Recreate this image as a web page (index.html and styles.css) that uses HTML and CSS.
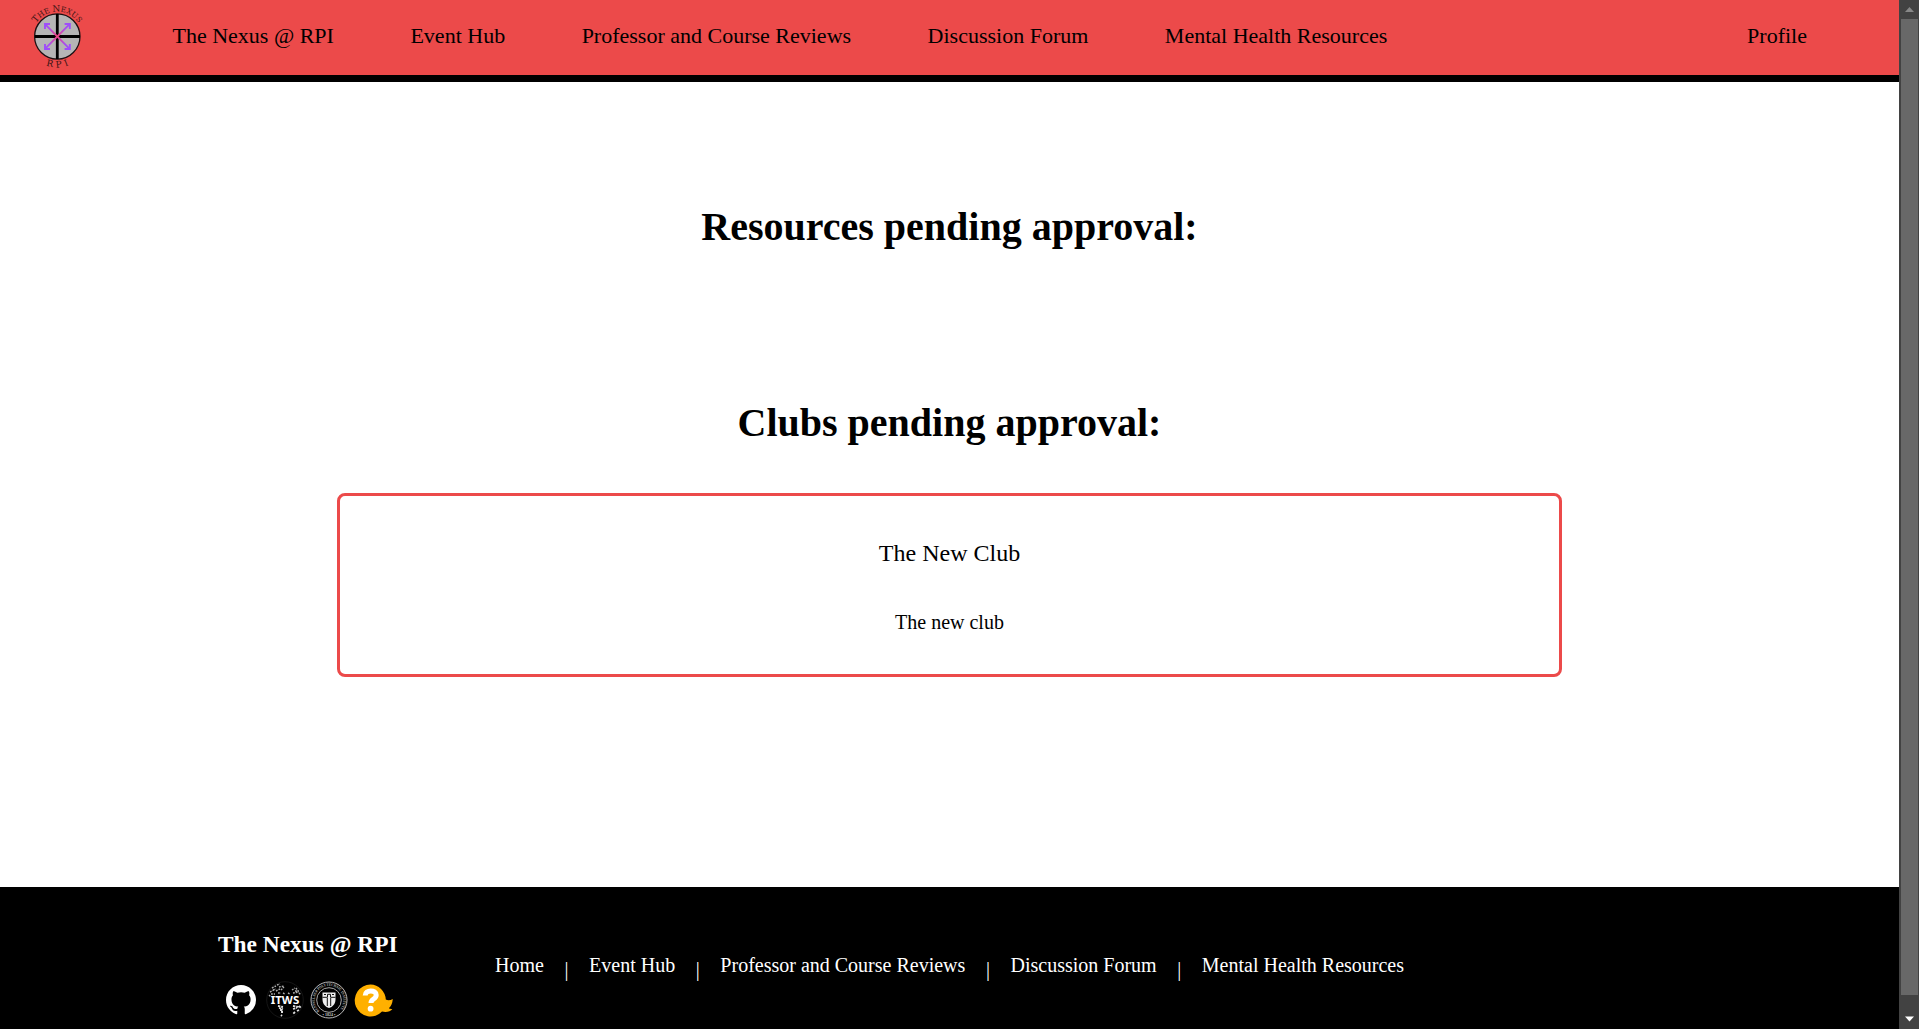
FILE: index.html
```html
<!DOCTYPE html>
<html lang="en">
<head>
<meta charset="utf-8">
<title>The Nexus @ RPI</title>
<link rel="stylesheet" href="styles.css">
</head>
<body>
<div class="page">
  <header class="header">
    <a class="logo">
      <svg width="52" height="68" viewBox="0 0 52 68">
        <defs>
          <path id="arc-top" d="M1.3 33.5A25 25 0 0 1 51.3 33.5"/>
          <path id="arc-bottom" d="M-4.7 33.5A31 31 0 0 0 57.3 33.5"/>
          <linearGradient id="g1" gradientUnits="userSpaceOnUse" x1="13" y1="20" x2="39" y2="46">
            <stop offset="0" stop-color="#9a4dff"/><stop offset=".2" stop-color="#a84df0"/><stop offset=".5" stop-color="#f0447c"/><stop offset=".8" stop-color="#a84df0"/><stop offset="1" stop-color="#9a4dff"/>
          </linearGradient>
          <linearGradient id="g2" gradientUnits="userSpaceOnUse" x1="39" y1="20" x2="13" y2="46">
            <stop offset="0" stop-color="#9a4dff"/><stop offset=".2" stop-color="#a84df0"/><stop offset=".5" stop-color="#f0447c"/><stop offset=".8" stop-color="#a84df0"/><stop offset="1" stop-color="#9a4dff"/>
          </linearGradient>
        </defs>
        <circle cx="26.3" cy="33.5" r="22.7" fill="#b5b5b5" stroke="#1c1012" stroke-width="1.3"/>
        <path d="M26.3 11V56M4 33.5H49" stroke="#000" stroke-width="2.8"/>
        <path d="M14 21.2L38.6 45.8M14 26V21H19M33.6 46H38.8V41" fill="none" stroke="url(#g1)" stroke-width="1.9"/>
        <path d="M38.6 21.2L14 45.8M33.6 21H38.8V26M14 41V46H19" fill="none" stroke="url(#g2)" stroke-width="1.9"/>
        <text class="logo-text"><textPath href="#arc-top" startOffset="50%">T<tspan class="sc">HE </tspan>N<tspan class="sc">EXUS</tspan></textPath></text>
        <text class="logo-rpi"><textPath href="#arc-bottom" startOffset="52%">RPI</textPath></text>
      </svg>
    </a>
    <nav class="nav">
      <a>The Nexus @ RPI</a>
      <a>Event Hub</a>
      <a>Professor and Course Reviews</a>
      <a>Discussion Forum</a>
      <a>Mental Health Resources</a>
      <a class="profile">Profile</a>
    </nav>
  </header>
  <main class="main">
    <h1 class="resources">Resources pending approval:</h1>
    <h1>Clubs pending approval:</h1>
    <section class="club">
      <h2>The New Club</h2>
      <p>The new club</p>
    </section>
  </main>
  <footer class="footer">
    <div class="brand">
      <h3>The Nexus @ RPI</h3>
      <div class="icons">
        <svg class="github" width="30" height="30" viewBox="0 0 16 16"><path fill="#fff" d="M8 0C3.58 0 0 3.58 0 8c0 3.54 2.29 6.53 5.47 7.59.4.07.55-.17.55-.38 0-.19-.01-.82-.01-1.49-2.01.37-2.53-.49-2.69-.94-.09-.23-.48-.94-.82-1.13-.28-.15-.68-.52-.01-.53.63-.01 1.08.58 1.23.82.72 1.21 1.87.87 2.33.66.07-.52.28-.87.51-1.07-1.78-.2-3.64-.89-3.64-3.95 0-.87.31-1.59.82-2.15-.08-.2-.36-1.02.08-2.12 0 0 .67-.21 2.2.82a7.6 7.6 0 0 1 4 0c1.53-1.04 2.2-.82 2.2-.82.44 1.1.16 1.92.08 2.12.51.56.82 1.27.82 2.15 0 3.07-1.87 3.75-3.65 3.95.29.25.54.73.54 1.48 0 1.07-.01 1.93-.01 2.2 0 .21.15.46.55.38A8.01 8.01 0 0 0 16 8c0-4.42-3.58-8-8-8z"/></svg>
        <svg width="38" height="38" viewBox="0 0 38 38">
          <circle cx="19" cy="19" r="18.3" fill="none" stroke="#151515"/>
          <path d="M11 4l3-1M6 7l4-2M13 6l5-1M4 11l4-2M10 10l4-2M15 9l3-3M26 9l3-2M27 12l6-1M30 7l2 3M22 12l2 1M17 12l2 1M5 13h4M12 12h3M33 12l2 2M3 14l2 2M7 9l3-1M29 10l4 0" stroke="#aaa" stroke-width="1.4" stroke-dasharray="1.8 1"/>
          <path d="M12 25l5 1M13 27l4 1M14 29l3 0M15 31l2 0M15 34l1 1M27 25l6 1M27 28l4-1M31 30l2-1M29 31l-2 2M33 25l2 2" stroke="#ddd" stroke-width="1.8" stroke-dasharray="2.4 .8"/>
          <text x="19" y="23" class="itws" textLength="28.5" lengthAdjust="spacingAndGlyphs">ITWS</text>
        </svg>
        <svg width="38" height="38" viewBox="0 0 38 38">
          <defs><path id="seal" d="M9.5 29.9A14.3 14.3 0 1 1 28.5 29.9"/></defs>
          <circle cx="19" cy="19" r="18" fill="none" stroke="#bbb" stroke-width="1"/>
          <circle cx="19" cy="19" r="12.3" fill="none" stroke="#bbb" stroke-width=".9"/>
          <text class="seal-text"><textPath href="#seal" textLength="66" lengthAdjust="spacingAndGlyphs">RENSSELAER POLYTECHNIC INSTITUTE</textPath></text>
          <text x="19" y="35.4" class="seal-year">• 1824 •</text>
          <path d="M12.5 11.5h13v7c0 4.5-3 7.5-6.5 8.5c-3.5-1-6.5-4-6.5-8.5z" fill="#eee"/>
          <path d="M12.5 16.3h5v-3h3v3h5M17.3 17v8M20.7 17v8M14 13.5h2M22 13.5h2" fill="none" stroke="#111" stroke-width="1"/>
        </svg>
        <svg class="duck" width="38" height="33" viewBox="0 0 38 33">
          <path fill="#ffb000" d="M15.5 .5a15.800 16 0 1 0 11.500 27c4.500 1 8.500 0 10.400-2.500c-1.500 .2-2.800-.1-3.600-.7c2-1.500 3.600-4.700 4-9.300c-2.600 1.400-5.100 1.600-7 .5A15.800 16 0 0 0 15.500 .5z"/>
          <path d="M10.200 11.500c0-6 11-6 11-.5c0 4.500-5.200 3.500-5.200 8" fill="none" stroke="#fff" stroke-width="5"/>
          <circle cx="15.600" cy="24.700" r="2.900" fill="#fff"/>
        </svg>
      </div>
    </div>
    <nav class="links">
      <a>Home</a><span>|</span><a>Event Hub</a><span>|</span><a>Professor and Course Reviews</a><span>|</span><a>Discussion Forum</a><span>|</span><a>Mental Health Resources</a>
    </nav>
  </footer>
</div>
<div class="scrollbar">
  <svg width="20" height="19" viewBox="0 0 20 19"><path fill="#888" d="M6 12L10.500 7L15 12z"/></svg>
  <div class="thumb"></div>
  <svg width="20" height="34" viewBox="0 0 20 34"><path fill="#fff" d="M6 21.500H15L10.500 26.500z"/></svg>
</div>
</body>
</html>
```
FILE: styles.css
```css
* { box-sizing: border-box; }
body {
  margin: 0;
  height: 1029px;
  display: flex;
  overflow: hidden;
  background: #fff;
  color: #000;
  font-family: "Liberation Serif", "Times New Roman", serif;
}
svg { display: block; flex: none; overflow: visible; }
h1, h2, h3, p { margin: 0; font-weight: normal; }
.page { width: 1899px; display: flex; flex-direction: column; }

.header {
  height: 82px;
  display: flex;
  background: #ec4a4a;
  border-bottom: 7px solid #000;
}
.logo { padding: 3px 0 0 31px; }
.logo-text, .logo-rpi {
  font-family: "DejaVu Serif", serif;
  fill: #3a1414;
  text-anchor: middle;
}
.logo-text { font-size: 9px; }
.logo-text .sc { font-size: 7.4px; }
.logo-rpi { font-size: 9px; letter-spacing: 3.5px; }
.nav {
  flex: 1;
  display: flex;
  gap: 76.5px;
  padding: 23px 92px 0 89.5px;
  font-size: 22px;
  line-height: 25px;
  white-space: nowrap;
}
.profile { margin-left: auto; }

.main { flex: 1; text-align: center; padding-top: 122px; }
h1 { font-size: 40px; font-weight: bold; line-height: 46px; }
.resources { margin-bottom: 150px; }
.club {
  width: 1225px;
  height: 184px;
  margin: 47px auto 0;
  padding-top: 43px;
  border: 3px solid #ec4a4a;
  border-radius: 8px;
}
.club h2 { font-size: 24px; line-height: 28px; }
.club p { font-size: 20px; line-height: 22px; margin-top: 44px; }

.footer {
  height: 142px;
  display: flex;
  background: #000;
  color: #fff;
  padding-left: 218px;
}
.brand { width: 277px; padding-top: 44px; }
h3 { font-size: 23.4px; font-weight: bold; line-height: 26px; }
.icons { display: flex; align-items: center; gap: 6px; padding: 24px 0 0 8px; }
.github { margin-right: 4px; }
.duck { margin-left: 1px; }
.itws { font: bold 11px "Noto Sans", sans-serif; fill: #fff; text-anchor: middle; }
.seal-text { font: bold 4px "Liberation Serif", serif; fill: #bbb; }
.seal-year { font: bold 4px "Liberation Serif", serif; fill: #ccc; text-anchor: middle; }
.links { display: flex; padding-top: 67px; font-size: 20px; line-height: 22px; white-space: nowrap; }
.links span { width: 45.2px; text-align: center; padding-top: 4px; }

.scrollbar { width: 20px; background: #424242; }
.thumb { width: 17px; height: 976px; margin-left: 2px; background: #686868; }
```
